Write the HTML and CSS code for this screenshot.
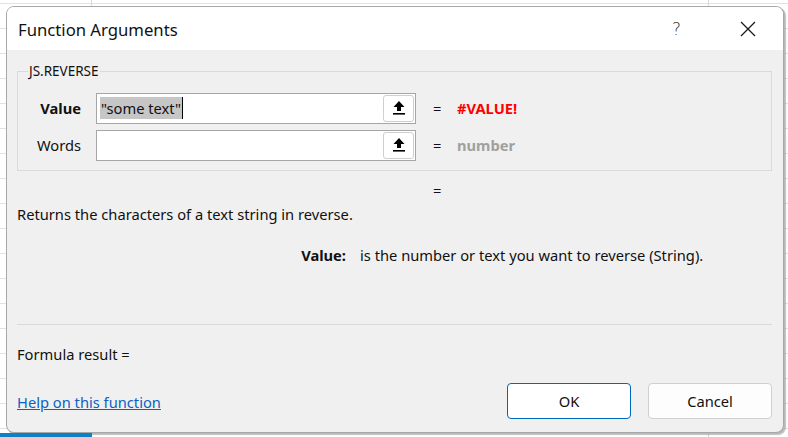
FILE: index.html
```html
<!DOCTYPE html>
<html>
<head>
<meta charset="utf-8">
<link rel="stylesheet" href="styles.css">
</head>
<body>
<div class="sheet">
  <div class="dialog">
    <div class="titlebar">
      <span class="title">Function Arguments</span>
      <span class="help">?</span>
      <svg class="close" width="16" height="16" viewBox="0 0 16 16"><path d="M1 1 L15 15 M15 1 L1 15" stroke="#1a1a1a" stroke-width="1.3" fill="none"/></svg>
    </div>
    <div class="content">
      <fieldset class="group">
        <legend>JS.REVERSE</legend>
        <div class="argrow">
          <span class="arglabel bold">Value</span>
          <div class="argbox">
            <span class="argtext"><span class="sel">"some text"</span><span class="caret"></span></span>
            <span class="refbtn"><svg width="12" height="14" viewBox="0 0 12 14"><path d="M6 0 L11.5 6 L8 6 L8 10 L4 10 L4 6 L0.5 6 Z" fill="#000"/><rect x="0" y="12" width="12" height="1.6" fill="#000"/></svg></span>
          </div>
          <span class="eq">=</span>
          <span class="result err">#VALUE!</span>
        </div>
        <div class="argrow">
          <span class="arglabel">Words</span>
          <div class="argbox">
            <span class="argtext"></span>
            <span class="refbtn"><svg width="12" height="14" viewBox="0 0 12 14"><path d="M6 0 L11.5 6 L8 6 L8 10 L4 10 L4 6 L0.5 6 Z" fill="#000"/><rect x="0" y="12" width="12" height="1.6" fill="#000"/></svg></span>
          </div>
          <span class="eq">=</span>
          <span class="result hint">number</span>
        </div>
      </fieldset>
      <div class="fxresult"><span class="eq">=</span></div>
      <div class="desc">Returns the characters of a text string in reverse.</div>
      <div class="argdesc"><span class="argname">Value:</span><span class="argtextdesc">is the number or text you want to reverse (String).</span></div>
      <div class="sep"></div>
      <div class="formula">Formula result =</div>
      <div class="footer">
        <a class="helplink" href="#">Help on this function</a>
        <div class="buttons">
          <button class="btn primary">OK</button>
          <button class="btn">Cancel</button>
        </div>
      </div>
    </div>
  </div>
  <div class="tabs"><span class="tab-active"></span></div>
</div>
</body>
</html>
```

FILE: styles.css
```css
* { box-sizing: border-box; }
html, body { margin: 0; padding: 0; }
body {
  width: 788px;
  height: 437px;
  overflow: hidden;
  font-family: "Noto Sans", "Open Sans", sans-serif;
  color: #111;
}
.sheet {
  width: 788px;
  height: 437px;
  background-color: #ffffff;
  background-image:
    repeating-linear-gradient(to right, transparent 0 91px, #dadada 91px 92px, transparent 92px 617px),
    repeating-linear-gradient(to bottom, transparent 0 3px, #e2e2e2 3px 4px, transparent 4px 25px);
  background-size: 788px 437px, 788px 25px;
  padding: 6px 4px 0 6px;
  display: flex;
  flex-direction: column;
}
.dialog {
  width: 778px;
  height: 427px;
  background: #f0f0f0;
  border: 1px solid #a8a8a8;
  border-radius: 8px;
  box-shadow: 1px 1px 0 #b8b8b8, 2px 2px 1px rgba(0,0,0,0.25);
  display: flex;
  flex-direction: column;
  overflow: hidden;
}
.titlebar {
  height: 43px;
  background: #ffffff;
  display: flex;
  align-items: center;
  padding: 0 0 0 11px;
  flex: none;
}
.title {
  font-size: 16.7px;
  flex: 1;
  padding-top: 1px;
}
.help {
  font-size: 17px;
  font-family: "DejaVu Sans", sans-serif;
  font-weight: 300;
  color: #333;
  margin-right: 59px;
}
.close { margin-right: 27px; }
.content {
  flex: 1;
  padding: 15px 11px 0 10px;
  display: flex;
  flex-direction: column;
  font-size: 14.7px;
}
.group {
  margin: 0;
  padding: 14px 0 0 0;
  border: 1px solid #dadada;
  height: 106px;
  width: 755px;
}
.group legend {
  font-size: 13.5px;
  padding: 0 1px;
  margin-left: 10px;
  line-height: 1;
}
.argrow {
  display: flex;
  align-items: center;
  height: 31px;
  margin-bottom: 6px;
}
.arglabel {
  width: 63px;
  text-align: right;
  font-size: 14.7px;
}
.bold { font-weight: 700; }
.argbox {
  margin-left: 15px;
  width: 320px;
  height: 31px;
  background: #fff;
  border: 1px solid #a6a6a6;
  display: flex;
  align-items: center;
  padding: 0 1px 0 3px;
}
.argtext {
  flex: 1;
  font-size: 14.7px;
  display: flex;
  align-items: center;
  height: 22px;
}
.sel { background: #c6c6c6; padding: 0 1px 0 1px; line-height: 22px; }
.caret { width: 1px; height: 22px; background: #000; }
.refbtn {
  width: 31px;
  height: 27px;
  border: 1px solid #cfcfcf;
  border-radius: 3px;
  background: #fff;
  display: flex;
  align-items: center;
  justify-content: center;
}
.eq {
  font-size: 14.7px;
  margin-left: 17px;
  width: 8px;
}
.result {
  margin-left: 16px;
  font-weight: 700;
  font-size: 14.7px;
}
.err { color: #ff0000; }
.hint { color: #a0a0a0; }
.fxresult {
  height: 37px;
  padding-left: 405px;
  display: flex;
  align-items: center;
  padding-top: 1px;
}
.fxresult .eq { margin-left: 11px; }
.desc {
  height: 17px;
  line-height: 17px;
  margin-top: -2px;
}
.argdesc {
  margin-top: 24px;
  display: flex;
  line-height: 17px;
}
.argname {
  width: 329px;
  text-align: right;
  font-weight: 700;
}
.argtextdesc { margin-left: 14px; }
.sep {
  margin-top: 60px;
  height: 1px;
  background: #dadada;
  width: 755px;
}
.formula {
  margin-top: 21px;
  line-height: 17px;
}
.footer {
  margin-top: 20px;
  display: flex;
  align-items: center;
  height: 36px;
}
.helplink {
  color: #0a62c4;
  text-decoration: underline;
  flex: 1;
  padding-top: 2px;
}
.buttons { display: flex; gap: 17px; }
.btn {
  width: 124px;
  height: 36px;
  font-family: "Noto Sans", sans-serif;
  font-size: 14.7px;
  color: #111;
  background: #fdfdfd;
  border: 1px solid #d0d0d0;
  border-radius: 4px;
}
.btn.primary { border-color: #0067c0; background: #ffffff; }
.tabs {
  flex: 1;
  display: flex;
  align-items: flex-end;
  margin-left: -6px;
}
.tab-active { width: 92px; height: 4px; background: #0a82c8; }
```
